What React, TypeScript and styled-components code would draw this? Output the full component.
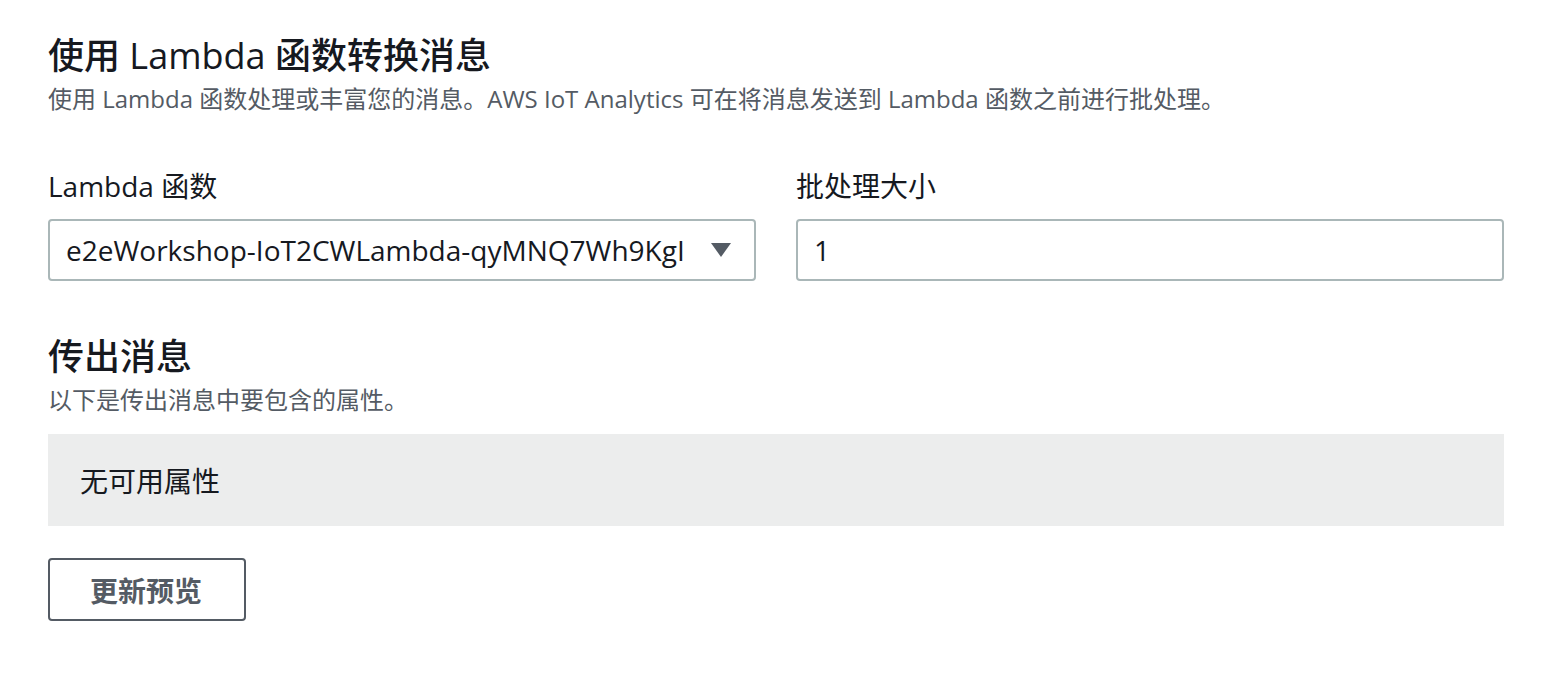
import React from "react";
import styled, { createGlobalStyle } from "styled-components";

const Global = createGlobalStyle`
  html, body { margin: 0; padding: 0; background: #ffffff; }
  body {
    font-family: "Open Sans", "Noto Sans CJK SC", "Noto Sans", sans-serif;
    color: #16191f;
  }
`;

const Page = styled.div`
  width: 1456px;
  padding: 32px 48px 40px 48px;
  display: flex;
  flex-direction: column;
`;

const Heading = styled.h2<{ $top?: number }>`
  margin: ${(p) => p.$top ?? 0}px 0 0 0;
  font-size: 36px;
  line-height: 48px;
  font-weight: 500;
  color: #16191f;
`;

const Description = styled.p`
  margin: 3px 0 0 0;
  font-size: 24px;
  line-height: 32px;
  color: #545b64;
`;

const FieldRow = styled.div`
  display: grid;
  grid-template-columns: 1fr 1fr;
  column-gap: 40px;
  margin-top: 51px;
`;

const Field = styled.div`
  display: flex;
  flex-direction: column;
  gap: 13px;
`;

const Label = styled.label`
  font-size: 28px;
  line-height: 40px;
  color: #16191f;
`;

const Box = styled.div`
  box-sizing: border-box;
  height: 62px;
  border: 2px solid #aab7b8;
  border-radius: 4px;
  display: flex;
  align-items: center;
  padding: 0 22px 0 16px;
  font-size: 28px;
  color: #16191f;
  background: #ffffff;
`;

const BoxText = styled.span`
  flex: 1;
  white-space: nowrap;
  overflow: hidden;
`;

const Caret = styled.svg`
  width: 22px;
  height: 16px;
  flex: none;
`;

const Empty = styled.div`
  margin-top: 18px;
  height: 92px;
  background: #eceded;
  display: flex;
  align-items: center;
  padding-left: 32px;
  font-size: 28px;
  color: #16191f;
`;

const ButtonRow = styled.div`
  margin-top: 32px;
  display: flex;
`;

const Button = styled.button`
  box-sizing: border-box;
  height: 63px;
  padding: 0 42px 0 40px;
  border: 2px solid #545b64;
  border-radius: 4px;
  background: #ffffff;
  font-family: inherit;
  font-size: 28px;
  font-weight: 700;
  color: #545b64;
  cursor: pointer;
`;

export default function App() {
  return (
    <>
      <Global />
      <Page>
        <Heading>使用 Lambda 函数转换消息</Heading>
        <Description>
          使用 Lambda 函数处理或丰富您的消息。AWS IoT Analytics 可在将消息发送到 Lambda 函数之前进行批处理。
        </Description>
        <FieldRow>
          <Field>
            <Label>Lambda 函数</Label>
            <Box>
              <BoxText>e2eWorkshop-IoT2CWLambda-qyMNQ7Wh9KgI</BoxText>
              <Caret viewBox="0 0 22 16">
                <path d="M1 1 H21 L11 15 Z" fill="#545b64" />
              </Caret>
            </Box>
          </Field>
          <Field>
            <Label>批处理大小</Label>
            <Box>
              <BoxText>1</BoxText>
            </Box>
          </Field>
        </FieldRow>
        <Heading $top={52}>传出消息</Heading>
        <Description>以下是传出消息中要包含的属性。</Description>
        <Empty>无可用属性</Empty>
        <ButtonRow>
          <Button>更新预览</Button>
        </ButtonRow>
      </Page>
    </>
  );
}
